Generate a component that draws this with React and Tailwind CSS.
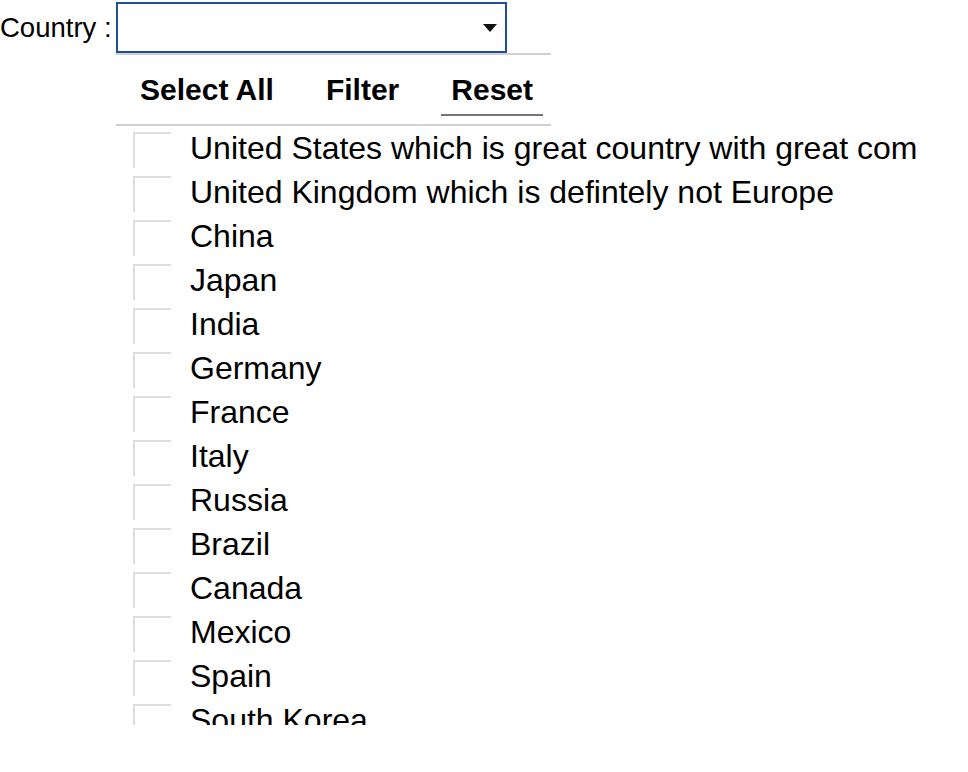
import React from "react";

const countries = [
  "United States which is great country with great com",
  "United Kingdom which is defintely not Europe",
  "China",
  "Japan",
  "India",
  "Germany",
  "France",
  "Italy",
  "Russia",
  "Brazil",
  "Canada",
  "Mexico",
  "Spain",
  "South Korea",
];

export default function App() {
  return (
    <div className="w-[968px] h-[772px] bg-white text-black" style={{ fontFamily: '"Liberation Sans", Arial, sans-serif' }}>
      <div className="flex items-center pt-[2px]">
        <span className="w-[116px] shrink-0 text-[27.5px] leading-[32px] whitespace-nowrap">Country :</span>
        <div className="w-[391px] h-[51px] border-2 border-[#1f4f97] flex items-center justify-end pr-[8px] box-border">
          <svg width="14" height="8" viewBox="0 0 14 8">
            <path d="M0 0 H14 L7 8 Z" fill="#111" />
          </svg>
        </div>
      </div>
      <div className="ml-[116px] w-[435px] border-t-2 border-b-2 border-[#d0d0d0]">
        <div className="flex pl-[14px] gap-[32px] pb-[8px]">
          {["Select All", "Filter", "Reset"].map((t) => (
            <div
              key={t}
              className={
                "px-[10px] pt-[18px] pb-[7px] text-[30px] leading-[34px] font-bold whitespace-nowrap border-b-2 " +
                (t === "Reset" ? "border-[#777777]" : "border-transparent")
              }
            >
              {t}
            </div>
          ))}
        </div>
      </div>
      <div className="h-[599px] overflow-hidden pt-[4px]">
        {countries.map((c) => (
          <div key={c} className="h-[44px] flex items-start ml-[117px]">
            <div className="mt-[2px] ml-[16px] w-[38px] h-[36px] shrink-0 border-t-2 border-l-2 border-[#dddddd]" />
            <span className="ml-[19px] text-[32px] leading-[36px] whitespace-nowrap">{c}</span>
          </div>
        ))}
      </div>
    </div>
  );
}
